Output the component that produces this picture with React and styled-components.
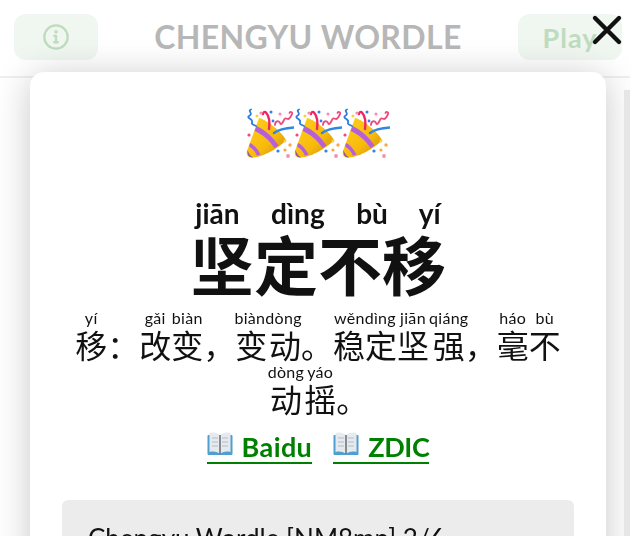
import React from 'react';
import styled, { createGlobalStyle } from 'styled-components';

const GlobalStyle = createGlobalStyle`
  html, body {
    margin: 0;
    height: 100%;
    overflow: hidden;
    background: #fff;
    font-family: Lato, "Noto Sans CJK SC", sans-serif;
    color: #111;
  }
`;

const Header = styled.header`
  height: 78px;
  box-sizing: border-box;
  border-bottom: 2px solid #e8e8e8;
  display: flex;
  align-items: flex-start;
  justify-content: space-between;
  padding: 14px 8px 0 14px;
`;

const HeaderButton = styled.button`
  height: 46px;
  width: ${({ $wide }) => ($wide ? '104px' : '84px')};
  padding: 0;
  border: 0;
  border-radius: 12px;
  background: #eaf2ea;
  color: #a4cda4;
  font: 700 27px Lato, sans-serif;
  letter-spacing: 1px;
  display: flex;
  align-items: center;
  justify-content: center;
`;

const Title = styled.h1`
  margin: 4px 0 0;
  font-size: 32px;
  line-height: 38px;
  font-weight: 700;
  letter-spacing: 0.35px;
  color: #999;
`;

const Overlay = styled.div`
  position: fixed;
  inset: 0;
  overflow: hidden;
  background: rgba(255, 255, 255, 0.3);
  padding: 72px 24px 0 30px;
  box-sizing: border-box;
`;

const Modal = styled.section`
  background: #fff;
  border-radius: 14px;
  box-shadow: 0 4px 36px rgba(0, 0, 0, 0.22);
  padding: 36px 32px 32px;
  text-align: center;
`;

const Poppers = styled.div`
  display: flex;
  justify-content: center;
  height: 50px;
`;

const WordLine = styled.div`
  margin-top: 38px;
  font-size: 64px;
  font-weight: 700;
  line-height: 72px;

  rt {
    font-size: 28px;
    font-weight: 700;
    line-height: 32px;
    padding-bottom: 3px;
    word-spacing: 14px;
  }
`;

const Definition = styled.p`
  margin: 6px 0 0;
  font-size: 32px;
  line-height: 51px;
  font-weight: 400;
  text-spacing-trim: space-all;

  rt {
    font-size: 16px;
    line-height: 16px;
    padding-bottom: 2px;
    font-weight: 400;
    letter-spacing: 0.3px;
  }
`;

const Links = styled.div`
  display: flex;
  justify-content: center;
  gap: 21px;
  margin-top: 5px;
`;

const DictLink = styled.a`
  display: flex;
  align-items: center;
  gap: 9px;
  height: 32px;
  color: #008000;
  font-size: 27px;
  font-weight: 700;
  letter-spacing: ${({ $spacing }) => $spacing};
  border-bottom: 2px solid #008000;

  svg {
    margin-bottom: 5px;
  }
`;

const ShareBox = styled.div`
  margin-top: 36px;
  background: #ececec;
  border-radius: 6px;
  padding: 23px 26px;
  height: 200px;
  text-align: left;
  font-size: 26px;
  line-height: 30px;
`;

const CloseButton = styled.button`
  position: fixed;
  top: 14px;
  right: 7px;
  width: 32px;
  height: 32px;
  padding: 0;
  border: 0;
  background: none;
`;

const ScrollEdge = styled.div`
  position: fixed;
  top: 90px;
  right: 0;
  bottom: 0;
  width: 6px;
  background: #e6e6e6;
`;

const InfoIcon = () => (
  <svg width="28" height="28" viewBox="0 0 24 24" fill="none" stroke="#a4cda4" strokeWidth="2" strokeLinecap="round">
    <circle cx="12" cy="12" r="10" />
    <path d="M12 11v5.5M10.5 11H12M10.5 16.5h3" />
    <circle cx="12" cy="7.5" r="0.6" />
  </svg>
);

const CloseIcon = () => (
  <svg width="32" height="32" viewBox="0 0 32 32" fill="none" stroke="#111" strokeWidth="4.4" strokeLinecap="round">
    <path d="M4 4l24 24M28 4L4 28" />
  </svg>
);

const Popper = ({ id }) => (
  <svg width="48" height="50" viewBox="0 0 48 50">
    <defs>
      <linearGradient id={id} x1="0" y1="0" x2="1" y2="1">
        <stop offset="0" stopColor="#ffd21f" />
        <stop offset="0.6" stopColor="#f7b90c" />
        <stop offset="1" stopColor="#c98a06" />
      </linearGradient>
    </defs>
    <path d="M13 10 C20 11 36 24 40 32 C34 39 18 49 7 49.5 C2 50 0 47 1 43 Z" fill={`url(#${id})`} />
    <path d="M10.5 18 C18 21 28 30 32.5 37.5 L28.5 40 C24 33 16 26 8.5 23 Z" fill="#b65fd8" />
    <path d="M4 35 C8 37 12 41 14.5 46.5 L11 47.8 C9 43 6 40 3 38.5 Z" fill="#b65fd8" />
    <path d="M1.5 42 C1 47 3 49.5 7 49.5 C4 47.5 2.5 45 1.5 42 Z" fill="#8f4fb0" />
    <path d="M28 25 C33 21 41 20 48 19.5" fill="none" stroke="#2f86e6" strokeWidth="2.4" strokeLinecap="round" />
    <path d="M23 21 C24 14 23 8 20 4.5 C19 3.5 17 4 17 6" fill="none" stroke="#f0265e" strokeWidth="2.4" strokeLinecap="round" />
    <path d="M5 1.5 C1 3 8 5.5 3 8 C0 10 8 11.5 6 14.5 C5 16 8 17 10 18" fill="none" stroke="#2b7de0" strokeWidth="1.8" strokeLinecap="round" />
    <path d="M29 17 C29 13 33 12 34 15 C35 18 37 14 38 12 C39 9 41 11 42 11 C44 11 45 8 46 6 C47 4 44 3 43.5 5" fill="none" stroke="#f0487a" strokeWidth="1.8" strokeLinecap="round" />
    <circle cx="11" cy="8" r="1.5" fill="#fbd23c" />
    <circle cx="15" cy="5" r="1.6" fill="#f68cb0" />
    <circle cx="25" cy="4" r="1.5" fill="#2b84e6" />
    <circle cx="27" cy="13" r="1.4" fill="#2b84e6" />
    <circle cx="34" cy="6" r="1.6" fill="#f68cb0" />
    <circle cx="3" cy="27" r="1.6" fill="#f0487a" />
    <circle cx="39" cy="33" r="1.5" fill="#fbd23c" />
    <circle cx="32" cy="43" r="1.6" fill="#2b84e6" />
    <circle cx="44" cy="37" r="1.7" fill="#f9a83c" />
    <circle cx="39" cy="42" r="1.6" fill="#f9a83c" />
    <circle cx="42" cy="48" r="1.9" fill="#f68cb0" />
  </svg>
);

const BookIcon = () => (
  <svg width="26" height="24" viewBox="0 0 26 24">
    <rect x="0.5" y="3" width="25" height="20" rx="1" fill="#4f9fd0" />
    <path d="M2.5 1 C7 0 11 1 13 3 C15 1 19 0 23.5 1 V20 C19 19 15 20 13 22 C11 20 7 19 2.5 20 Z" fill="#e6eaee" />
    <path d="M13 3 V22" stroke="#59626b" strokeWidth="1.4" />
    <path d="M5 6h6M5 10h6M5 14h6M15 6h6M15 10h6M15 14h6" stroke="#b3bbc2" strokeWidth="1.2" />
  </svg>
);

const definition = [
  ['移', 'yí'], '：', ['改', 'gǎi'], ['变', 'biàn'], '，', ['变动', 'biàndòng'], '。',
  ['稳定', 'wěndìng'], ['坚', 'jiān'], ['强', 'qiáng'], '，', ['毫', 'háo'], ['不', 'bù'],
  ['动', 'dòng'], ['摇', 'yáo'], '。',
];

const App = () => (
  <>
    <GlobalStyle />
    <Header>
      <HeaderButton aria-label="Info"><InfoIcon /></HeaderButton>
      <Title>CHENGYU WORDLE</Title>
      <HeaderButton $wide>Play</HeaderButton>
    </Header>
    <Overlay>
      <Modal>
        <Poppers>
          <Popper id="cone-a" />
          <Popper id="cone-b" />
          <Popper id="cone-c" />
        </Poppers>
        <WordLine>
          <ruby>
            坚定不移
            <rt>jiān dìng bù yí</rt>
          </ruby>
        </WordLine>
        <Definition>
          {definition.map((part, i) =>
            typeof part === 'string' ? (
              <span key={i}>{part}</span>
            ) : (
              <React.Fragment key={i}>
                {part[0] === '动' && <br />}
                <ruby>
                  {part[0]}
                  <rt>{part[1]}</rt>
                </ruby>
              </React.Fragment>
            )
          )}
        </Definition>
        <Links>
          <DictLink $spacing="0.4px"><BookIcon /> Baidu</DictLink>
          <DictLink $spacing="-0.4px"><BookIcon /> ZDIC</DictLink>
        </Links>
        <ShareBox>Chengyu Wordle [NM8mn] 2/6</ShareBox>
      </Modal>
    </Overlay>
    <ScrollEdge />
    <CloseButton aria-label="Close"><CloseIcon /></CloseButton>
  </>
);

export default App;
